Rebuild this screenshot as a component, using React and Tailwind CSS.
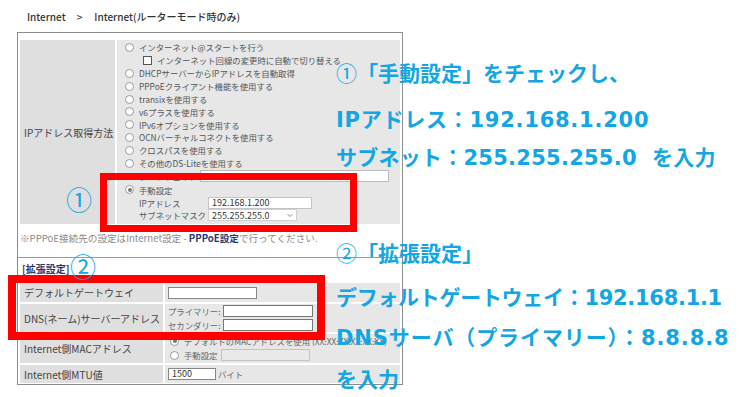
function Radio({ checked }) {
  return (
    <span className="flex h-[9px] w-[9px] shrink-0 items-center justify-center rounded-full border border-[#9a9a9a] bg-white">
      {checked && <span className="h-[4px] w-[4px] rounded-full bg-[#777]" />}
    </span>
  );
}

function Field({ className = "", children }) {
  return (
    <span className={`flex h-[12px] shrink-0 items-center border border-[#9a9a9a] bg-white pl-[3px] text-[9px] text-[#333] ${className}`}>
      {children}
    </span>
  );
}

const methods = [
  "DHCPサーバーからIPアドレスを自動取得",
  "PPPoEクライアント機能を使用する",
  "transixを使用する",
  "v6プラスを使用する",
  "IPv6オプションを使用する",
  "OCNバーチャルコネクトを使用する",
  "クロスパスを使用する",
  "その他のDS-Liteを使用する",
];

const notes = [
  { mark: "①", text: "「手動設定」をチェックし、", cls: "mt-[58px]" },
  { text: "IPアドレス：192.168.1.200", cls: "mt-[20px] tracking-[0.75px]" },
  { text: "サブネット：255.255.255.0  を入力", cls: "mt-[10px] tracking-[0.25px]" },
  { mark: "②", text: "「拡張設定」", cls: "mt-[66px]" },
  { text: "デフォルトゲートウェイ：192.168.1.1", cls: "mt-[18px] tracking-[-0.3px]" },
  { text: "DNSサーバ（プライマリー）：8.8.8.8", cls: "mt-[12px] tracking-[0.9px]" },
  { text: "を入力", cls: "mt-[14px]" },
];

export default function App() {
  return (
    <div className="relative h-[397px] w-[744px] overflow-hidden bg-white font-['Noto_Sans_CJK_JP',sans-serif]">
      <div className="flex h-[32px] items-center pl-[27px] text-[10px] font-medium text-[#333]">
        <span>Internet</span>
        <span className="ml-[11px]">&gt;</span>
        <span className="ml-[12px]">Internet(ルーターモード時のみ)</span>
      </div>

      <div className="ml-[17px] w-[386px] border border-[#8c8c8c] px-[2px] pb-[1px] pt-[7px]">
        <div className="flex h-[184px] gap-[2px]">
          <div className="flex w-[95px] items-center bg-[#dfdfdf] pl-[4px] text-[10px] text-[#444]">
            IPアドレス取得方法
          </div>
          <div className="flex-1 overflow-hidden whitespace-nowrap bg-[#e7e7e7] pl-[8px] pt-[1px] text-[8.4px] leading-none text-[#555]">
            <div className="flex h-[12.9px] items-center gap-[5px]">
              <Radio />
              <span>インターネット@スタートを行う</span>
            </div>
            <div className="flex h-[12.9px] items-center gap-[5px] pl-[18px]">
              <span className="h-[9px] w-[9px] shrink-0 border border-[#555] bg-white" />
              <span>インターネット回線の変更時に自動で切り替える</span>
            </div>
            {methods.map((m) => (
              <div key={m} className="flex h-[12.9px] items-center gap-[5px]">
                <Radio />
                <span>{m}</span>
              </div>
            ))}
            <div className="flex h-[12px] items-center pl-[14px]">
              <span className="w-[61px]">ゲートウェイアドレス</span>
              <Field className="w-[189px] border-[#bbb]" />
            </div>
            <div className="mt-[1px] flex h-[14px] items-center gap-[5px]">
              <Radio checked />
              <span>手動設定</span>
            </div>
            <div className="flex h-[12px] items-center pl-[14px]">
              <span className="w-[69px]">IPアドレス</span>
              <Field className="w-[104px] border-[#c4c4c4]">192.168.1.200</Field>
            </div>
            <div className="flex h-[13px] items-center pl-[14px]">
              <span className="w-[69px]">サブネットマスク</span>
              <span className="flex h-[12px] w-[89px] items-center justify-between border border-[#d0d0d0] bg-white pl-[3px] pr-[2px] text-[9px] text-[#333]">
                255.255.255.0
                <svg width="8" height="8" viewBox="0 0 8 8" className="text-[#888]">
                  <path d="M1.5 3l2.5 2.5 2.5-2.5" fill="none" stroke="currentColor" strokeWidth="1" />
                </svg>
              </span>
            </div>
          </div>
        </div>

        <div className="mt-[8px] flex h-[12px] items-center whitespace-nowrap text-[9.6px] text-[#8a8a8a]">
          ※PPPoE接続先の設定はInternet設定 -&nbsp;
          <span className="font-bold text-[#2b3670]">PPPoE設定</span>
          で行ってください.
        </div>

        <div className="-mx-[2px] mt-[13px] h-[1px] bg-[#9a9a9a]" />

        <div className="mt-[4px] flex h-[12px] items-center pl-[2px] text-[10px] font-bold text-[#2b3670]">
          [拡張設定]
        </div>

        <div className="mt-[9px] grid grid-cols-[143px_1fr] gap-[2px] text-[#444]">
          <div className="flex h-[19px] items-center bg-[#dfdfdf] pl-[4px] text-[10px]">デフォルトゲートウェイ</div>
          <div className="flex h-[19px] items-center bg-[#e7e7e7] pl-[3px]">
            <Field className="w-[89px] border-[#888]" />
          </div>

          <div className="flex h-[28px] items-center bg-[#dfdfdf] pl-[4px] text-[10px]">DNS(ネーム)サーバーアドレス</div>
          <div className="flex h-[28px] flex-col justify-center gap-[2px] whitespace-nowrap bg-[#e7e7e7] pl-[3px] text-[8.4px] leading-none text-[#666]">
            <div className="flex items-center">
              <span className="w-[55px] shrink-0">プライマリー:</span>
              <Field className="w-[90px] border-[#777]" />
            </div>
            <div className="flex items-center">
              <span className="w-[55px] shrink-0">セカンダリー:</span>
              <Field className="w-[90px] border-[#777]" />
            </div>
          </div>

          <div className="flex h-[29px] items-center bg-[#dfdfdf] pl-[4px] text-[10px]">Internet側MACアドレス</div>
          <div className="flex h-[29px] flex-col justify-center gap-[2px] overflow-hidden whitespace-nowrap bg-[#e7e7e7] pl-[5px] text-[8.4px] leading-none text-[#666]">
            <div className="flex h-[11px] items-center gap-[5px]">
              <Radio checked />
              <span>デフォルトのMACアドレスを使用 (XX:XX:XX:XX:XX:XX)</span>
            </div>
            <div className="flex h-[13px] items-center gap-[5px]">
              <Radio />
              <span className="w-[32px] shrink-0">手動設定</span>
              <span className="h-[12px] w-[89px] shrink-0 border border-[#c4c4c4] bg-[#e9e9e9]" />
            </div>
          </div>

          <div className="flex h-[18px] items-center bg-[#dfdfdf] pl-[4px] text-[10px]">Internet側MTU値</div>
          <div className="flex h-[18px] items-center gap-[2px] bg-[#e7e7e7] pl-[3px] text-[8.4px] text-[#666]">
            <Field className="w-[48px] border-[#888]">1500</Field>
            <span>バイト</span>
          </div>
        </div>
      </div>

      <div className="absolute left-[100px] top-[173px] h-[59px] w-[257px] border-[7px] border-[#ff0000]" />
      <div className="absolute left-[8px] top-[275px] h-[65px] w-[317px] border-[8px] border-[#ff0000]" />

      <div className="absolute left-[66px] top-[186px] h-[26px] text-[26px] leading-[26px] text-[#13a6e4]">①</div>
      <div className="absolute left-[70px] top-[253px] h-[26px] text-[26px] leading-[26px] text-[#13a6e4]">②</div>

      <div className="absolute left-[336px] top-0 flex flex-col whitespace-pre font-['DejaVu_Sans','Noto_Sans_CJK_JP',sans-serif] text-[21px] font-bold text-[#13a6e4]">
        {notes.map((n) => (
          <div key={n.text} className={`h-[28px] leading-[28px] ${n.cls}`}>
            {n.mark && <span className="font-['Noto_Sans_CJK_JP',sans-serif] font-normal">{n.mark}</span>}
            {n.text}
          </div>
        ))}
      </div>
    </div>
  );
}
